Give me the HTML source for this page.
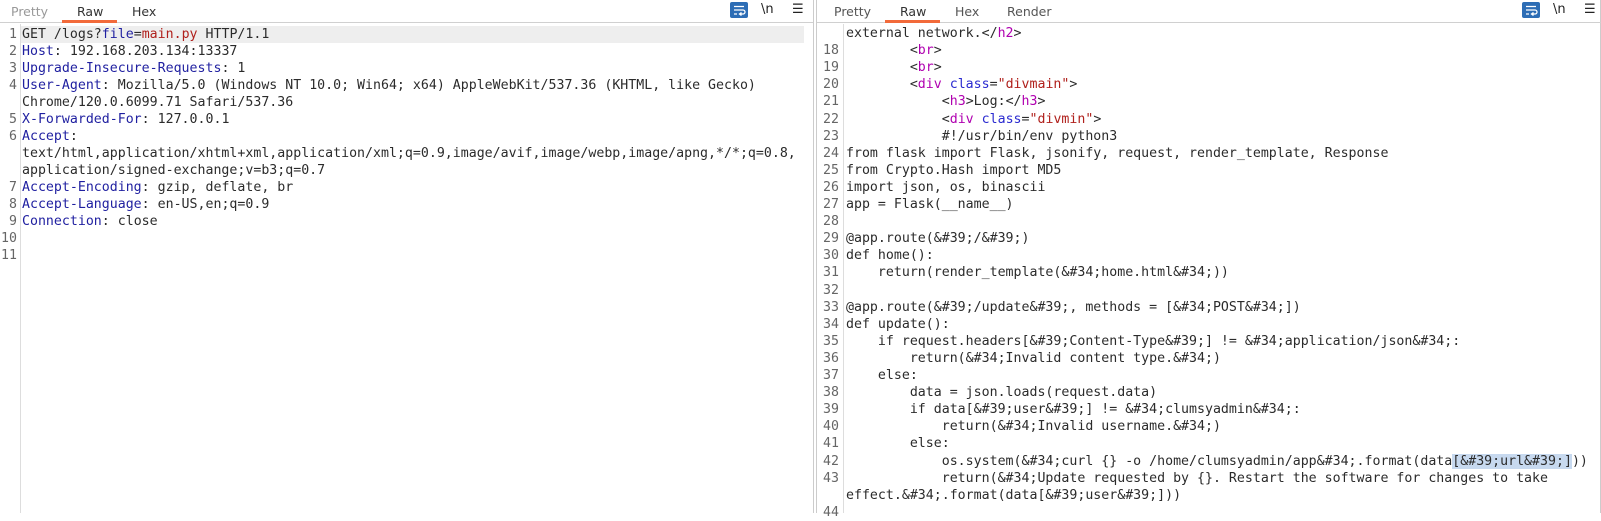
<!DOCTYPE html>
<html><head><meta charset="utf-8"><style>
*{margin:0;padding:0;box-sizing:border-box}
body{width:1601px;height:513px;background:#fff;position:relative;overflow:hidden;font-family:"DejaVu Sans Mono","Liberation Mono",monospace;font-size:13.25px;color:#2b2b2b}
.tabs{position:absolute;top:0;height:23px;border-bottom:1px solid #d0d0d0}
.tab{position:absolute;top:4px;color:#333;font-family:"DejaVu Sans","Liberation Sans",sans-serif;font-size:12.5px}
.tab.dim{color:#999}
.ul{position:absolute;top:20px;height:3px;background:#f26a3a}
.r{position:absolute;white-space:pre;line-height:17px;height:17px}
.r span{letter-spacing:inherit}
.n{position:absolute;white-space:pre;line-height:17px;height:17px;text-align:right;color:#666}
.k{color:#1f1fa0}.v{color:#b0201c}.t{color:#b000b0}.a{color:#2a2ad0}
.sel{background:#c7d9ef}
.gut{position:absolute;top:24px;bottom:0;width:1px;background:#ddd}
.wrap{position:absolute;top:2px;width:18px;height:16px;background:#2d6db5;border-radius:2px}
.ic{position:absolute;top:2px;font-family:"DejaVu Sans",sans-serif;font-size:13px;color:#222}
</style></head><body>
<div class="tabs" style="left:0;width:813px"></div>
<div class="tab dim" style="left:11px">Pretty</div>
<div class="tab" style="left:77px">Raw</div>
<div class="ul" style="left:62px;width:55px"></div>
<div class="tab" style="left:132px">Hex</div>
<div class="wrap" style="left:730px"><svg width="18" height="16"><path d="M4 4.5h10M4 8h9a2 2 0 0 1 0 4h-3M11.5 10.5l-2 1.5 2 1.5M4 12h3" stroke="#fff" stroke-width="1.3" fill="none"/></svg></div>
<div class="ic" style="left:761px">\n</div>
<div class="ic" style="left:792px">☰</div>
<div style="position:absolute;left:21px;top:26px;width:783px;height:17px;background:#eeeeee"></div>
<div class="gut" style="left:20px"></div>
<div style="position:absolute;left:813px;top:0;bottom:0;width:1px;background:#ccc"></div>
<div style="position:absolute;left:816px;top:0;bottom:0;width:1px;background:#ccc"></div>
<div style="position:absolute;left:1600px;top:0;bottom:0;width:1px;background:#ccc"></div>

<div id="L"></div>
<div class="tabs" style="left:817px;width:784px"></div>
<div class="tab" style="left:834px;color:#555">Pretty</div>
<div class="tab" style="left:900px">Raw</div>
<div class="ul" style="left:885px;width:55px"></div>
<div class="tab" style="left:955px;color:#555">Hex</div>
<div class="tab" style="left:1007px;color:#555">Render</div>
<div class="wrap" style="left:1522px"><svg width="18" height="16"><path d="M4 4.5h10M4 8h9a2 2 0 0 1 0 4h-3M11.5 10.5l-2 1.5 2 1.5M4 12h3" stroke="#fff" stroke-width="1.3" fill="none"/></svg></div>
<div class="ic" style="left:1553px">\n</div>
<div class="ic" style="left:1584px">☰</div>
<div class="gut" style="left:843px"></div>

<script>
var L=[
['1','GET /logs?<span class="k">file</span>=<span class="v">main.py</span> HTTP/1.1'],
['2','<span class="k">Host</span>: 192.168.203.134:13337'],
['3','<span class="k">Upgrade-Insecure-Requests</span>: 1'],
['4','<span class="k">User-Agent</span>: Mozilla/5.0 (Windows NT 10.0; Win64; x64) AppleWebKit/537.36 (KHTML, like Gecko)'],
['','Chrome/120.0.6099.71 Safari/537.36'],
['5','<span class="k">X-Forwarded-For</span>: 127.0.0.1'],
['6','<span class="k">Accept</span>:'],
['','text/html,application/xhtml+xml,application/xml;q=0.9,image/avif,image/webp,image/apng,*/*;q=0.8,'],
['','application/signed-exchange;v=b3;q=0.7'],
['7','<span class="k">Accept-Encoding</span>: gzip, deflate, br'],
['8','<span class="k">Accept-Language</span>: en-US,en;q=0.9'],
['9','<span class="k">Connection</span>: close'],
['10',''],['11','']];
var R=[
['','external network.&lt;/<span class="t">h2</span>&gt;'],
['18','        &lt;<span class="t">br</span>&gt;'],
['19','        &lt;<span class="t">br</span>&gt;'],
['20','        &lt;<span class="t">div</span> <span class="a">class</span>=<span class="v">"divmain"</span>&gt;'],
['21','            &lt;<span class="t">h3</span>&gt;Log:&lt;/<span class="t">h3</span>&gt;'],
['22','            &lt;<span class="t">div</span> <span class="a">class</span>=<span class="v">"divmin"</span>&gt;'],
['23','            #!/usr/bin/env python3'],
['24','from flask import Flask, jsonify, request, render_template, Response'],
['25','from Crypto.Hash import MD5'],
['26','import json, os, binascii'],
['27','app = Flask(__name__)'],
['28',''],
['29','@app.route(&amp;#39;/&amp;#39;)'],
['30','def home():'],
['31','    return(render_template(&amp;#34;home.html&amp;#34;))'],
['32',''],
['33','@app.route(&amp;#39;/update&amp;#39;, methods = [&amp;#34;POST&amp;#34;])'],
['34','def update():'],
['35','    if request.headers[&amp;#39;Content-Type&amp;#39;] != &amp;#34;application/json&amp;#34;:'],
['36','        return(&amp;#34;Invalid content type.&amp;#34;)'],
['37','    else:'],
['38','        data = json.loads(request.data)'],
['39','        if data[&amp;#39;user&amp;#39;] != &amp;#34;clumsyadmin&amp;#34;:'],
['40','            return(&amp;#34;Invalid username.&amp;#34;)'],
['41','        else:'],
['42','            os.system(&amp;#34;curl {} -o /home/clumsyadmin/app&amp;#34;.format(data<span class="sel">[&amp;#39;url&amp;#39;]</span>))'],
['43','            return(&amp;#34;Update requested by {}. Restart the software for changes to take'],
['','effect.&amp;#34;.format(data[&amp;#39;user&amp;#39;]))'],
['44','']];
var h='';
L.forEach(function(l,i){var y=26+i*17;h+='<div class="n" style="left:0;width:17px;top:'+y+'px">'+l[0]+'</div><div class="r" style="left:22px;top:'+y+'px">'+l[1]+'</div>';});
R.forEach(function(l,i){var y=25+i*17.1;h+='<div class="n" style="left:818px;width:21px;top:'+y+'px">'+l[0]+'</div><div class="r" style="left:846px;top:'+y+'px">'+l[1]+'</div>';});
document.getElementById('L').innerHTML=h;
</script>
</body></html>
